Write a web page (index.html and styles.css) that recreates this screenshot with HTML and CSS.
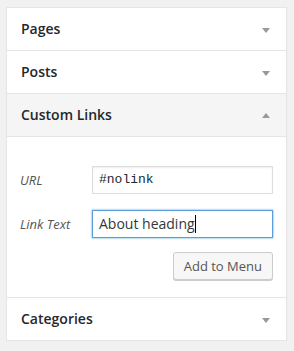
FILE: index.html
```html
<!DOCTYPE html>
<html>
<head>
<meta charset="utf-8">
<link rel="stylesheet" href="styles.css">
</head>
<body>
<div class="panel">
  <div class="section">
    <div class="head"><span class="title">Pages</span><span class="arrow down"></span></div>
  </div>
  <div class="section">
    <div class="head"><span class="title">Posts</span><span class="arrow down"></span></div>
  </div>
  <div class="section open">
    <div class="head"><span class="title">Custom Links</span><span class="arrow up"></span></div>
    <div class="body">
      <div class="field">
        <label class="label">URL</label>
        <div class="input code">#nolink</div>
      </div>
      <div class="field">
        <label class="label">Link Text</label>
        <div class="input focus">About heading<span class="caret"></span></div>
      </div>
      <div class="actions">
        <button class="button">Add to Menu</button>
      </div>
    </div>
  </div>
  <div class="section">
    <div class="head"><span class="title">Categories</span><span class="arrow down"></span></div>
  </div>
</div>
</body>
</html>
```
FILE: styles.css
```css
html, body {
  margin: 0;
  padding: 0;
  background: #f1f1f1;
}
body {
  padding: 7px 7px 0 6px;
  font-family: "Open Sans", "Liberation Sans", sans-serif;
  color: #23282d;
}
.panel {
  width: 279px;
  background: #fff;
  border: 1px solid #e5e5e5;
  box-shadow: 0 1px 1px rgba(0,0,0,0.04);
}
.section {
  border-bottom: 1px solid #e5e5e5;
}
.section:last-child {
  border-bottom: 0;
}
.head {
  height: 42px;
  display: flex;
  align-items: center;
  justify-content: space-between;
  padding: 0 16px 0 14px;
}
.open .head {
  background: #f5f5f5;
  border-bottom: 1px solid #e5e5e5;
}
.title {
  font-size: 14px;
  font-weight: 600;
  line-height: 20px;
}
.arrow {
  width: 0;
  height: 0;
  border-left: 4px solid transparent;
  border-right: 4px solid transparent;
}
.arrow.down {
  border-top: 5px solid #999;
  margin-top: 2px;
}
.arrow.up {
  border-bottom: 5px solid #999;
}
.body {
  padding: 29px 13px 17px 13px;
  display: flex;
  flex-direction: column;
}
.field {
  display: flex;
  align-items: center;
  margin-bottom: 16px;
}
.label {
  width: 72px;
  font-style: italic;
  font-size: 13px;
  color: #555;
}
.input {
  box-sizing: border-box;
  width: 181px;
  height: 28px;
  border: 1px solid #ddd;
  box-shadow: inset 0 1px 2px rgba(0,0,0,0.07);
  padding: 0 6px;
  font-size: 14px;
  line-height: 26px;
  color: #32373c;
  display: flex;
  align-items: center;
}
.input.code {
  font-family: "Liberation Mono", "DejaVu Sans Mono", monospace;
  font-size: 13px;
  color: #23282d;
}
.input.focus {
  border-color: #5b9dd9;
  box-shadow: 0 0 2px rgba(30,140,190,0.8);
}
.caret {
  display: inline-block;
  width: 1px;
  height: 18px;
  background: #000;
}
.actions {
  display: flex;
  justify-content: flex-end;
  margin-top: -2px;
}
.button {
  height: 28px;
  box-sizing: border-box;
  padding: 0 10px;
  font-family: "Open Sans", "Liberation Sans", sans-serif;
  font-size: 13px;
  line-height: 26px;
  color: #555;
  background: #f7f7f7;
  border: 1px solid #ccc;
  border-radius: 3px;
  box-shadow: 0 1px 0 #ccc;
}
```
